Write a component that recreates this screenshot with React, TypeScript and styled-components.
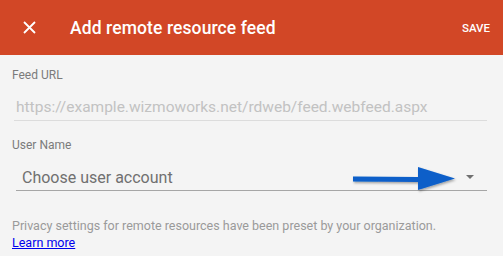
import React from 'react'
import styled, { createGlobalStyle } from 'styled-components'

const GlobalStyle = createGlobalStyle`
  html, body {
    margin: 0;
    padding: 0;
    background: #f4f4f4;
  }
  body {
    font-family: Roboto, 'Liberation Sans', Arial, sans-serif;
  }
`

const Page = styled('div')`
  width: 503px;
  height: 256px;
  display: flex;
  flex-direction: column;
  background: #f4f4f4;
  overflow: hidden;
`

const Toolbar = styled('div')`
  height: 55px;
  flex-shrink: 0;
  display: flex;
  flex-direction: row;
  align-items: center;
  background-color: #d24726;
  color: #ffffff;
  padding: 0 13px 0 22px;
`

const CloseButton = styled('button')`
  width: 15px;
  height: 15px;
  padding: 0;
  border: none;
  background: none;
  display: flex;
  align-items: center;
  justify-content: center;
  margin-right: 33px;
`

const Title = styled('h1')`
  flex: 1;
  margin: 0;
  font-size: 17.5px;
  font-weight: 500;
  letter-spacing: 0.1px;
`

const SaveButton = styled('button')`
  border: none;
  background: none;
  padding: 0;
  color: #ffffff;
  font-family: inherit;
  font-size: 11.5px;
  font-weight: 500;
`

const Form = styled('div')`
  display: flex;
  flex-direction: column;
  padding: 13px 16px 0 12px;
`

const Label = styled('div')<{ $gap: number }>`
  margin-top: ${(p) => p.$gap}px;
  font-size: 12px;
  color: #7b7b7b;
  line-height: 14px;
`

const Field = styled('div')<{ $active?: boolean; $indent: number; $gap: number }>`
  position: relative;
  display: flex;
  align-items: center;
  height: 26px;
  padding-top: 1px;
  margin-top: ${(p) => p.$gap}px;
  margin-left: ${(p) => (p.$active ? 4 : 2)}px;
  padding-left: ${(p) => p.$indent}px;
  border-bottom: 1px solid ${(p) => (p.$active ? '#a6a6a6' : '#dcdcdc')};
`

const FieldText = styled('span')<{ $muted?: boolean }>`
  font-size: ${(p) => (p.$muted ? 15.5 : 16)}px;
  color: ${(p) => (p.$muted ? '#c2c2c2' : '#707070')};
  white-space: nowrap;
`

const Caret = styled('span')`
  margin-left: auto;
  margin-right: 13px;
  width: 0;
  height: 0;
  border-left: 4px solid transparent;
  border-right: 4px solid transparent;
  border-top: 4px solid #707070;
`

const Pointer = styled('svg')`
  position: absolute;
  left: 335px;
  top: 2px;
`

const Note = styled('p')`
  margin: 26px 0 0 0;
  font-size: 12.5px;
  line-height: 17px;
  color: #9a9a9a;
`

const NoteLink = styled('a')`
  color: #0000ee;
  text-decoration: underline;
`

export default function App() {
  return (
    <Page>
      <GlobalStyle />
      <Toolbar>
        <CloseButton aria-label="Close">
          <svg width="13" height="13" viewBox="0 0 13 13">
            <path d="M1 1 L12 12 M12 1 L1 12" stroke="#ffffff" strokeWidth="1.8" fill="none" />
          </svg>
        </CloseButton>
        <Title>Add remote resource feed</Title>
        <SaveButton>SAVE</SaveButton>
      </Toolbar>
      <Form>
        <Label $gap={0}>Feed URL</Label>
        <Field $indent={2} $gap={11}>
          <FieldText $muted>https://example.wizmoworks.net/rdweb/feed.webfeed.aspx</FieldText>
        </Field>
        <Label $gap={17}>User Name</Label>
        <Field $active $indent={6} $gap={11}>
          <FieldText>Choose user account</FieldText>
          <Caret />
          <Pointer width="110" height="30" viewBox="0 0 110 30">
            <defs>
              <filter id="sh" x="-10%" y="-30%" width="130%" height="170%">
                <feDropShadow dx="1" dy="1.5" stdDeviation="1" floodColor="#000" floodOpacity="0.35" />
              </filter>
            </defs>
            <g filter="url(#sh)">
              <path d="M2 11.5 L67 12 L67 2 L104 13.5 L67 25 L67 17 L2 16.5 Z" fill="#0a5ec9" />
            </g>
          </Pointer>
        </Field>
        <Note>
          Privacy settings for remote resources have been preset by your organization.
          <br />
          <NoteLink href="#">Learn more</NoteLink>
        </Note>
      </Form>
    </Page>
  )
}
